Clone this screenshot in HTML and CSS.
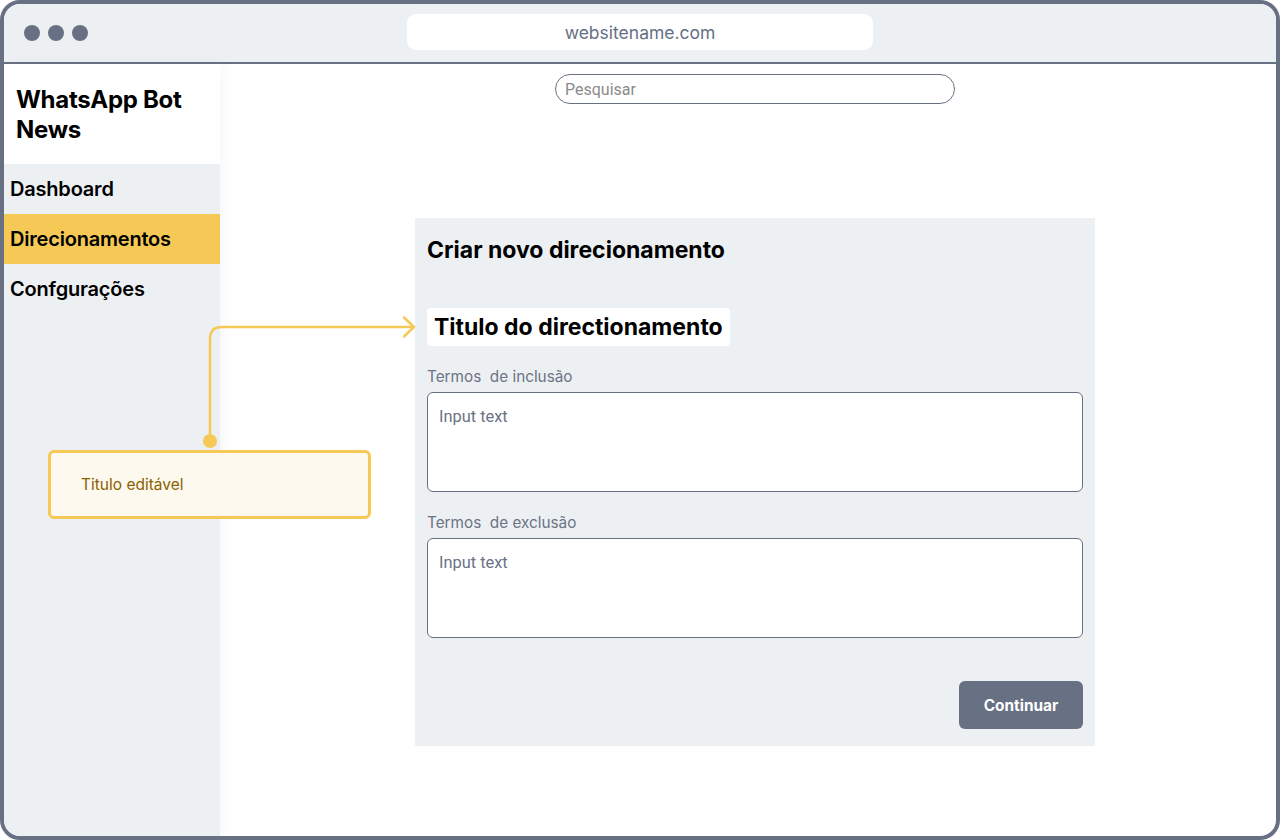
FILE: index.html
```html
<!DOCTYPE html>
<html lang="pt">
<head>
<meta charset="utf-8">
<title>WhatsApp Bot News</title>
<link rel="stylesheet" href="styles.css">
</head>
<body>
<div class="frame">
  <div class="topbar">
    <div class="dots"><span class="dot"></span><span class="dot"></span><span class="dot"></span></div>
    <div class="url">websitename.com</div>
  </div>
  <div class="window">
    <aside class="sidebar">
      <div class="brand">WhatsApp Bot News</div>
      <nav class="nav">
        <div class="nav-item">Dashboard</div>
        <div class="nav-item active">Direcionamentos</div>
        <div class="nav-item">Confgurações</div>
      </nav>
    </aside>
    <main class="main">
      <div class="column">
        <input class="search" type="text" placeholder="Pesquisar">
        <section class="card">
          <h1 class="card-title">Criar novo direcionamento</h1>
          <div class="title-box">Titulo do directionamento</div>
          <label class="label">Termos&nbsp; de inclusão</label>
          <textarea class="field" placeholder="Input text"></textarea>
          <label class="label">Termos&nbsp; de exclusão</label>
          <textarea class="field" placeholder="Input text"></textarea>
          <div class="actions"><button class="btn">Continuar</button></div>
        </section>
      </div>
    </main>
  </div>
  <svg class="connector" width="1280" height="840" viewBox="0 0 1280 840">
    <path d="M210 441 V339 Q210 327 222 327 H413" fill="none" stroke="#f6c956" stroke-width="2.5"/>
    <path d="M404 317.5 L414 327 L404 336.5" fill="none" stroke="#f6c956" stroke-width="2.5" stroke-linecap="round" stroke-linejoin="round"/>
    <circle cx="210" cy="441" r="7" fill="#f6c956"/>
  </svg>
  <div class="note">Titulo editável</div>
</div>
</body>
</html>
```
FILE: styles.css
```css
* { box-sizing: border-box; }
html, body { margin: 0; padding: 0; background: #fff; }
body { font-family: Inter, "Noto Sans", sans-serif; color: #000; }

.frame {
  position: relative;
  width: 1280px;
  height: 840px;
  border: 4px solid #687083;
  border-radius: 20px;
  overflow: hidden;
  display: flex;
  flex-direction: column;
  background: #fff;
}

.topbar {
  height: 60px;
  flex: none;
  background: #edf0f3;
  border-bottom: 2px solid #687083;
  display: flex;
  align-items: center;
  position: relative;
}
.dots { display: flex; gap: 8px; padding-left: 20px; }
.dot { width: 16px; height: 16px; border-radius: 50%; background: #687083; }
.url {
  position: absolute;
  left: 403px;
  top: 10px;
  width: 466px;
  height: 36px;
  background: #fff;
  border-radius: 9px;
  display: flex;
  align-items: center;
  justify-content: center;
  font-size: 17.5px;
  color: #667085;
}

.window { flex: 1; display: flex; min-height: 0; }

.sidebar {
  width: 216px;
  flex: none;
  background: #edf0f3;
  box-shadow: 4px 0 14px rgba(0, 0, 0, 0.035);
  position: relative;
  z-index: 1;
}
.brand {
  background: #fff;
  height: 100px;
  padding: 21px 12px 0;
  font-size: 24px;
  line-height: 30px;
  font-weight: 700;
  letter-spacing: -0.3px;
}
.nav-item {
  height: 50px;
  display: flex;
  align-items: center;
  padding-left: 6px;
  font-size: 20px;
  font-weight: 600;
  letter-spacing: -0.2px;
}
.nav-item.active { background: #f6c956; }

.main { flex: 1; padding-left: 195px; padding-top: 10px; }
.column { width: 680px; display: flex; flex-direction: column; align-items: center; }

.search {
  width: 400px;
  height: 30px;
  border: 1px solid #687083;
  border-radius: 15px;
  padding: 0 9px;
  font-family: Roboto, sans-serif;
  font-size: 16px;
  outline: none;
  background: #fff;
}
.search::placeholder { color: #8a8a8a; }

.card {
  margin-top: 114px;
  width: 680px;
  background: #edf0f3;
  padding: 18px 12px 17px;
  display: flex;
  flex-direction: column;
  align-items: flex-start;
}
.card-title {
  margin: 0;
  font-size: 23px;
  line-height: 28px;
  font-weight: 700;
}
.title-box {
  margin-top: 44px;
  height: 38px;
  background: #fff;
  border-radius: 4px;
  padding: 0 7px;
  display: flex;
  align-items: center;
  font-size: 23px;
  font-weight: 700;
}
.label {
  margin-top: 21px;
  margin-bottom: 5px;
  font-size: 15.3px;
  line-height: 20px;
  color: #6b7385;
}
.field {
  width: 656px;
  height: 100px;
  border: 1px solid #687083;
  border-radius: 6px;
  background: #fff;
  padding: 14px 11px;
  font-family: Roboto, sans-serif;
  font-size: 16.4px;
  line-height: 20px;
  resize: none;
  outline: none;
  margin: 0;
  display: block;
}
.field::placeholder { color: #6b7385; }

.actions { width: 100%; display: flex; justify-content: flex-end; margin-top: 43px; }
.btn {
  width: 124px;
  height: 48px;
  border: none;
  border-radius: 6px;
  background: #687083;
  color: #fff;
  font-family: Inter, sans-serif;
  font-size: 15.4px;
  font-weight: 700;
}

.connector { position: absolute; left: -4px; top: -4px; pointer-events: none; z-index: 2; }
.note {
  position: absolute;
  left: 44px;
  top: 446px;
  width: 323px;
  height: 69px;
  border: 3px solid #f6c956;
  border-radius: 6px;
  background: #fef9ee;
  padding-left: 30px;
  display: flex;
  align-items: center;
  font-size: 15.5px;
  color: #8a6100;
  z-index: 2;
}
```
